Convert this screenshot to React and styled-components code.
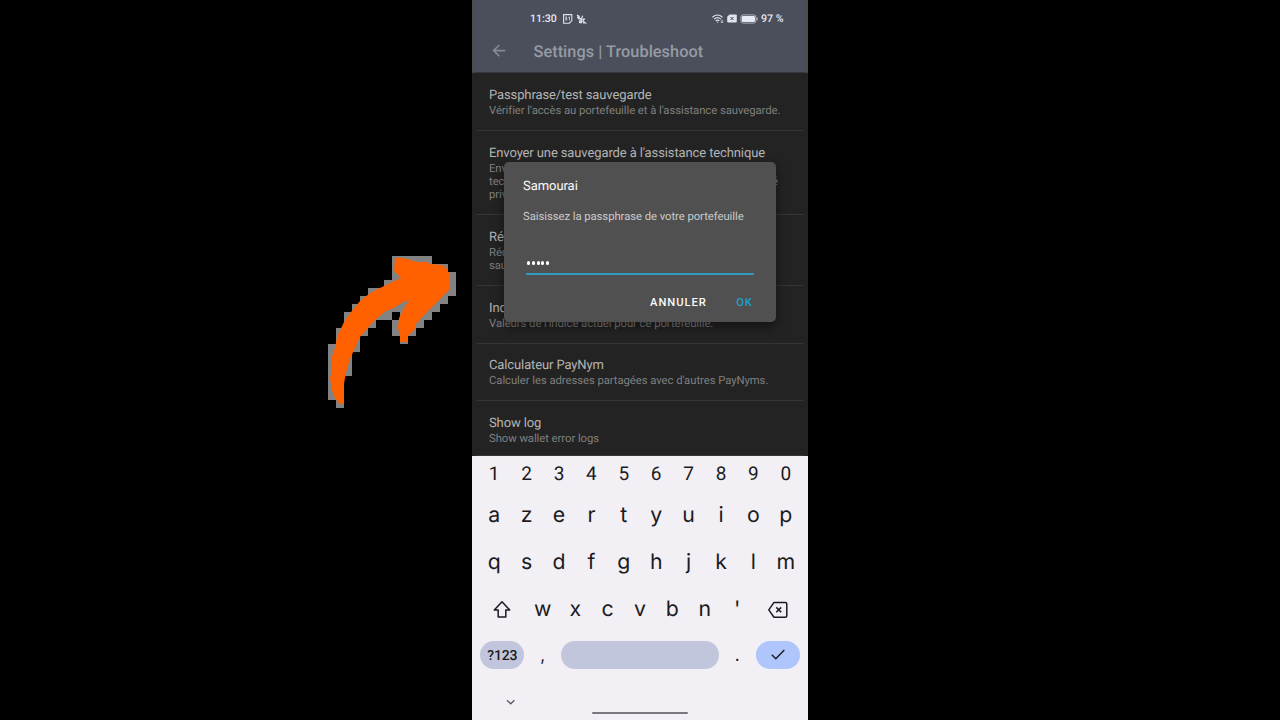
import React from "react";
import styled, { createGlobalStyle } from "styled-components";

const Global = createGlobalStyle`
  * { box-sizing: border-box; }
  html, body { margin: 0; background: #000; }
  body { width: 1280px; height: 720px; overflow: hidden; font-family: Roboto, sans-serif; text-rendering: geometricPrecision; }
`;

const Stage = styled.main`
  position: relative;
  display: flex;
  justify-content: center;
  width: 1280px;
  height: 720px;
  background: #000;
`;

const Phone = styled.section`
  position: relative;
  display: flex;
  flex-direction: column;
  width: 336px;
  height: 720px;
  background: #f2eff5;
`;

const Header = styled.header`
  height: 73px;
  background: #4b4f5b;
  border-bottom: 1px solid #343740;
  border-left: 4px solid #4b4e53;
  border-right: 4px solid #4b4e53;
`;

const StatusBar = styled.div`
  display: flex;
  align-items: center;
  justify-content: space-between;
  height: 37px;
  padding: 0 20.5px 0 54px;
  color: #e6e8f2;
  font-size: 10.6px;
  font-weight: 500;
`;

const StatusGroup = styled.div`
  display: flex;
  align-items: center;
  gap: ${(p) => p.$gap}px;
  white-space: nowrap;
`;

const TitleBar = styled.div`
  display: flex;
  align-items: center;
  height: 28px;
  padding-left: 16px;
  gap: 27.5px;
`;

const PageTitle = styled.h1`
  margin: 0;
  color: #969ba6;
  font-size: 16.3px;
  font-weight: 500;
  letter-spacing: 0.05px;
`;

const List = styled.div`
  height: 383px;
  padding: 0 4px;
  background: #232323;
`;

const Row = styled.div`
  height: ${(p) => p.$height}px;
  padding: 14.6px 10px 0 13px;
  border-bottom: 1px solid #353535;
  white-space: nowrap;
`;

const RowTitle = styled.div`
  margin-bottom: 0.4px;
  color: #b4b4b4;
  font-size: 13px;
  line-height: 16px;
  letter-spacing: -0.115px;
`;

const RowLine = styled.div`
  width: 289px;
  color: #808080;
  font-size: 11.3px;
  line-height: 13.2px;
  letter-spacing: -0.055px;
  text-align-last: ${(p) => (p.$justify ? "justify" : "left")};
`;

const Dialog = styled.div`
  position: absolute;
  left: 32px;
  top: 162px;
  width: 272px;
  height: 160px;
  padding: 15.6px 22px 0 19px;
  border-radius: 5px;
  background: #505050;
  box-shadow: 0 5px 12px rgba(0, 0, 0, 0.45);
`;

const DialogTitle = styled.div`
  color: #fafafa;
  font-size: 13px;
  line-height: 17px;
  letter-spacing: -0.05px;
`;

const DialogText = styled.div`
  margin-top: 14.4px;
  color: #cbcbcb;
  font-size: 11.3px;
  line-height: 15px;
  letter-spacing: -0.055px;
  white-space: nowrap;
`;

const Field = styled.div`
  display: flex;
  align-items: center;
  gap: 1.7px;
  width: 228px;
  height: 25px;
  margin: 26.5px 0 0 3px;
  padding: 2px 1px 0;
  border-bottom: 2px solid #3399be;
`;

const Dot = styled.i`
  width: 3.1px;
  height: 3.1px;
  border-radius: 50%;
  background: #fff;
`;

const Actions = styled.div`
  display: flex;
  justify-content: flex-end;
  gap: 29.4px;
  margin-top: 20px;
  padding-right: 1.2px;
`;

const Action = styled.button`
  padding: 0;
  border: 0;
  background: none;
  color: ${(p) => (p.$accent ? "#239dd0" : "#fafafa")};
  font: 500 11.2px/15px Roboto, sans-serif;
  letter-spacing: 0.95px;
`;

const Keyboard = styled.div`
  flex: 1;
  padding: 0 6px;
  color: #1b1b21;
`;

const KeyRow = styled.div`
  display: grid;
  grid-template-columns: ${(p) => p.$columns};
  height: ${(p) => p.$height}px;
  align-items: center;
`;

const Key = styled.div`
  display: flex;
  justify-content: center;
  align-items: center;
  padding-top: ${(p) => p.$drop || 0}px;
  font-family: ${(p) => (p.$digit ? "Roboto" : "Inter")}, sans-serif;
  font-size: ${(p) => p.$size || 21.3}px;
  line-height: 30px;
`;

const Pill = styled.div`
  display: flex;
  justify-content: center;
  align-items: center;
  height: 28.5px;
  margin: 0 2.2px;
  padding-top: ${(p) => (p.$label ? 1.6 : 0)}px;
  border-radius: 15px;
  background: ${(p) => (p.$accent ? "#afc6fd" : "#c2c6dc")};
  font-size: 14px;
  font-weight: 500;
  letter-spacing: -0.2px;
`;

const NavStrip = styled.div`
  display: flex;
  height: 41px;
  padding: 19.8px 0 0 27px;
  gap: 76px;
`;

const HomeBar = styled.div`
  width: 96px;
  height: 2px;
  margin-top: 13.8px;
  border-radius: 1px;
  background: #7b7980;
`;

const ArrowArt = styled.svg`
  position: absolute;
  left: 320px;
  top: 240px;
`;

const rows = [
  { h: 58, title: "Passphrase/test sauvegarde", lines: ["Vérifier l'accès au portefeuille et à l'assistance sauvegarde."] },
  {
    h: 84,
    title: "Envoyer une sauvegarde à l'assistance technique",
    lines: ["Envoyer une sauvegarde à l'assistance", "technique. Ne contient aucune clé", "privée."],
    justify: 1,
  },
  { h: 71, title: "Réémettre", lines: ["Récupérer depuis la", "sauvegarde."] },
  { h: 57.5, title: "Indices", lines: ["Valeurs de l'indice actuel pour ce portefeuille."] },
  { h: 57.5, title: "Calculateur PayNym", lines: ["Calculer les adresses partagées avec d'autres PayNyms."] },
  { h: 55, title: "Show log", lines: ["Show wallet error logs"] },
];

const letterRows = ["azertyuiop", "qsdfghjklm"];

const halo = [
  [72, 16, 40], [72, 24, 56], [72, 32, 64], [64, 40, 72], [48, 48, 88], [40, 56, 88],
  [32, 64, 88], [24, 72, 48], [80, 72, 32], [24, 80, 32], [72, 80, 32], [16, 88, 32],
  [72, 88, 24], [16, 96, 24], [80, 96, 8], [8, 104, 32], [8, 112, 24], [8, 120, 24],
  [8, 128, 24], [8, 136, 16], [8, 144, 16], [8, 152, 16], [16, 160, 8],
];

function CurvedArrow() {
  return (
    <ArrowArt width="150" height="180" viewBox="0 0 150 180">
      <g fill="#828282" shapeRendering="crispEdges">
        {halo.map(([x, y, w]) => <rect key={`${x}-${y}`} x={x} y={y} width={w} height="8" />)}
      </g>
      <path
        fill="#ff6000"
        d="M75 18 Q80 17 87 19 L97 22 L107 22 L110 24 L122 25 Q127 27 128 32 L130 33 L130 49 L117 62 L104 75 L96 84 L95 89 L88 96 L87 102 L80 102 L80 96 L78 88 L79 78 L82 72 L89 60 Q82 62 74 68 L66 71 Q54 80 47 89 L40 97 L35 108 L29 121 L28 126 L26 132 L24 144 L24 164 L20 164 L15 158 L12 150 L10 138 L12 130 L12 116 L15 108 L17 97 L24 82 L31 72 L40 61 Q50 52 62 47 L74 41 L81 38 L74 31 Z"
      />
    </ArrowArt>
  );
}

export default function App() {
  return (
    <>
      <Global />
      <Stage>
        <CurvedArrow />
        <Phone>
          <Header>
            <StatusBar>
              <StatusGroup $gap={6}>
                <span>11:30</span>
                <svg width="24" height="10" viewBox="0 0 24 10" fill="none" stroke="#e0e2ec">
                  <path d="M.6.6h8.2v6L6.4 9.2H.6z" strokeWidth="1.1" />
                  <path d="M2.2 3h1.6L2.6 4.6h1.2V6H2.1M5.4 3.6l1.1-.7v3.4" strokeWidth=".8" />
                  <path d="M14 1.2l2 1.2v2.4h2.4v3.8h-1.6V6.2M14 3.6h2" strokeWidth="1.5" />
                  <path d="M19.8 1.8 18.6 4M19.3 5.2h2l-1.4 2 2.4 1.6H20" strokeWidth="1.2" />
                </svg>
              </StatusGroup>
              <StatusGroup $gap={3}>
                <svg width="12" height="10" viewBox="0 0 12 10" fill="none" stroke="#e0e2ec">
                  <path d="M.5 3.2Q5.5-1.2 10.5 3.2M2 5.1q3.5-2.9 7 0M3.7 6.8q1.8-1.5 3.6 0" strokeWidth="1.2" />
                  <path d="m5.5 9-1-1.2h2z" fill="#e0e2ec" stroke="none" />
                  <path d="M10 5.5v3.2M8.7 7.5 10 8.8l1.3-1.3" strokeWidth=".8" />
                </svg>
                <svg width="10" height="9" viewBox="0 0 10 9">
                  <path d="M2.5.5H9q.8 0 .8.8v6.4q0 .8-.8.8H1q-.8 0-.8-.8V2.8z" fill="#e0e2ec" />
                  <path d="m3.5 3 3 3m0-3-3 3" stroke="#4b4f5b" />
                </svg>
                <svg width="18" height="10" viewBox="0 0 18 10">
                  <rect x=".9" y=".9" width="15" height="8.2" rx="2.3" fill="none" stroke="#c5c8d2" strokeWidth=".8" />
                  <rect x="1.8" y="1.9" width="13.2" height="6.2" rx="1.3" fill="#e6e8f2" />
                  <path d="M17.1 3.5v3" stroke="#c5c8d2" />
                </svg>
                <span>97 %</span>
              </StatusGroup>
            </StatusBar>
            <TitleBar>
              <svg width="14" height="14" viewBox="0 0 14 14" fill="none" stroke="#858a96" strokeWidth="1.6">
                <path d="M13.3 6.6H2M7.3 1 1.6 6.6l5.7 5.6" />
              </svg>
              <PageTitle>Settings | Troubleshoot</PageTitle>
            </TitleBar>
          </Header>
          <List>
            {rows.map((row) => (
              <Row key={row.title} $height={row.h}>
                <RowTitle>{row.title}</RowTitle>
                {row.lines.map((line, i) => (
                  <RowLine key={line} $justify={row.justify === i}>{line}</RowLine>
                ))}
              </Row>
            ))}
          </List>
          <Keyboard>
            <KeyRow $columns="repeat(10, 1fr)" $height={35.2}>
              {[..."1234567890"].map((c) => <Key key={c} $digit $size={19}>{c}</Key>)}
            </KeyRow>
            {letterRows.map((letters) => (
              <KeyRow key={letters} $columns="repeat(10, 1fr)" $height={46.75}>
                {[...letters].map((c) => <Key key={c} $drop={1.2}>{c}</Key>)}
              </KeyRow>
            ))}
            <KeyRow $columns="1.5fr repeat(7, 1fr) 1.5fr" $height={46.75}>
              <Key>
                <svg width="18" height="22" viewBox="0 0 18 22" fill="none" stroke="#1b1b21" strokeWidth="1.5" strokeLinejoin="round">
                  <path d="M9 4.7 1.3 13h3.9v7h7.6v-7h3.9z" />
                </svg>
              </Key>
              {[..."wxcvbn'"].map((c) => <Key key={c} $drop={1.2}>{c}</Key>)}
              <Key>
                <svg width="20" height="22" viewBox="0 0 20 22" fill="none" stroke="#1b1b21" strokeWidth="1.5" strokeLinejoin="round">
                  <path d="M6 5.4h11.3q1.5 0 1.5 1.5v11.9q0 1.5-1.5 1.5H6l-5.2-7.4zM8.3 10.4l4.9 4.9m0-4.9-4.9 4.9" />
                </svg>
              </Key>
            </KeyRow>
            <KeyRow $columns="1.5fr 1fr 5fr 1fr 1.5fr" $height={46.75}>
              <Pill $label>?123</Pill>
              <Key $size={17} $drop={2}>,</Key>
              <Pill />
              <Key $size={17} $drop={2}>.</Key>
              <Pill $accent>
                <svg width="14" height="11" viewBox="0 0 14 11" fill="none" stroke="#1b1b21" strokeWidth="1.5">
                  <path d="m.8 5.8 4 4L13.3 1" />
                </svg>
              </Pill>
            </KeyRow>
            <NavStrip>
              <svg width="11" height="8" viewBox="0 0 11 8" fill="none" stroke="#55545b" strokeWidth="1.2">
                <path d="m2 2.2 3.7 3.6 3.7-3.6" />
              </svg>
              <HomeBar />
            </NavStrip>
          </Keyboard>
          <Dialog>
            <DialogTitle>Samourai</DialogTitle>
            <DialogText>Saisissez la passphrase de votre portefeuille</DialogText>
            <Field>{[0, 1, 2, 3, 4].map((i) => <Dot key={i} />)}</Field>
            <Actions>
              <Action>ANNULER</Action>
              <Action $accent>OK</Action>
            </Actions>
          </Dialog>
        </Phone>
      </Stage>
    </>
  );
}
